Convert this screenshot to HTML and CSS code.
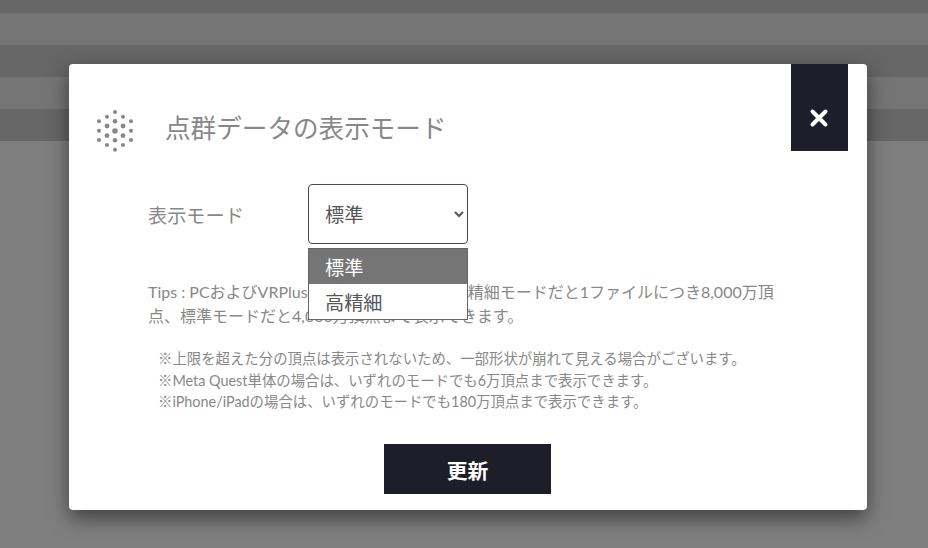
FILE: index.html
```html
<!DOCTYPE html>
<html lang="ja">
<head>
    <meta charset="UTF-8">
    <title>点群データの表示モード</title>
    <link rel="stylesheet" href="styles.css">
</head>
<body>
    <div class="backdrop">
        <div class="stripe stripe-top"></div>
        <div class="stripe stripe-light"></div>
        <div class="stripe stripe-dark"></div>
        <div class="stripe stripe-light"></div>
        <div class="stripe stripe-dark"></div>
    </div>

    <div class="modal">
        <button class="close-btn" aria-label="閉じる">
            <svg width="20" height="20" viewBox="0 0 20 20">
                <path d="M3.5 3.5L16.5 16.5M16.5 3.5L3.5 16.5" stroke="#fff" stroke-width="4" stroke-linecap="round"/>
            </svg>
        </button>

        <div class="modal-header">
            <svg class="points-icon" width="40" height="44" viewBox="0 0 40 44" fill="#888">
                <circle cx="20" cy="3" r="2"/>
                <circle cx="20" cy="12.3" r="2.3"/>
                <circle cx="20" cy="22" r="2.8"/>
                <circle cx="20" cy="31.3" r="2.3"/>
                <circle cx="20" cy="40.7" r="2"/>
                <circle cx="12" cy="7.7" r="2"/>
                <circle cx="12" cy="17" r="2.4"/>
                <circle cx="12" cy="26.7" r="2.4"/>
                <circle cx="12" cy="36" r="2"/>
                <circle cx="28" cy="7.7" r="2"/>
                <circle cx="28" cy="17" r="2.4"/>
                <circle cx="28" cy="26.7" r="2.4"/>
                <circle cx="28" cy="36" r="2"/>
                <circle cx="4" cy="12.3" r="2"/>
                <circle cx="4" cy="21.7" r="2"/>
                <circle cx="4" cy="31" r="2"/>
                <circle cx="36" cy="12.3" r="2"/>
                <circle cx="36" cy="21.7" r="2"/>
                <circle cx="36" cy="31" r="2"/>
            </svg>
            <h1 class="modal-title">点群データの表示モード</h1>
        </div>

        <div class="modal-body">
            <div class="mode-row">
                <label class="mode-label" for="mode">表示モード</label>
                <div class="select-wrap">
                    <select class="mode-select" id="mode">
                        <option>標準</option>
                        <option>高精細</option>
                    </select>
                    <ul class="mode-options">
                        <li class="selected">標準</li>
                        <li>高精細</li>
                    </ul>
                </div>
            </div>

            <p class="tips">Tips : PCおよびVRPlusでの閲覧の場合は、高精細モードだと1ファイルにつき8,000万頂点、標準モードだと4,000万頂点まで表示できます。</p>

            <ul class="notes">
                <li>※上限を超えた分の頂点は表示されないため、一部形状が崩れて見える場合がございます。</li>
                <li>※Meta Quest単体の場合は、いずれのモードでも6万頂点まで表示できます。</li>
                <li>※iPhone/iPadの場合は、いずれのモードでも180万頂点まで表示できます。</li>
            </ul>
        </div>

        <div class="modal-footer">
            <button class="update-btn">更新</button>
        </div>
    </div>
</body>
</html>
```

FILE: styles.css
```css
* {
    box-sizing: border-box;
}
html, body {
    height: 100%;
}
body {
    margin: 0;
    overflow: hidden;
    background-color: #7f7f7f;
    font-family: Lato, "Noto Sans CJK JP", sans-serif;
    color: #888;
}

/* page behind the overlay */
.stripe-top {
    height: 13px;
    background-color: #666;
}
.stripe-light {
    height: 32px;
    background-color: #757575;
}
.stripe-dark {
    height: 32px;
    background-color: #666;
}

/* modal */
.modal {
    position: absolute;
    left: 69px;
    top: 64px;
    width: 798px;
    height: 446px;
    background-color: #fff;
    border-radius: 4px;
    box-shadow: 0 8px 20px rgba(0, 0, 0, 0.5);
}
.close-btn {
    position: absolute;
    top: 0;
    right: 19px;
    width: 57px;
    height: 87px;
    padding: 24px 1px 0 0;
    border: none;
    background-color: #1e1e2a;
    cursor: pointer;
}
.modal-header {
    display: flex;
    align-items: center;
    height: 44px;
    margin-top: 45px;
    padding-left: 26px;
}
.modal-title {
    margin: 0 0 4px 30px;
    font-size: 25.6px;
    font-weight: 400;
    line-height: 1.4;
    color: #888;
}
.modal-body {
    padding: 31px 80px 0 79px;
    position: relative;
}
.mode-row {
    display: flex;
    align-items: center;
}
.mode-label {
    width: 160px;
    padding-top: 2px;
    font-size: 19.2px;
}
.select-wrap {
    position: relative;
}
.mode-select {
    display: block;
    width: 160px;
    height: 60px;
    padding: 0 8px 0 12px;
    border: 1px solid #4b4766;
    border-radius: 4px;
    background-color: #fff;
    font-family: inherit;
    font-size: 19.2px;
    color: #555;
}
.mode-options {
    position: absolute;
    top: 64px;
    left: 0;
    width: 160px;
    margin: 0;
    padding: 0;
    list-style: none;
    background-color: #fff;
    border: 1px solid #666;
    font-size: 19.2px;
    color: #555;
}
.mode-options li {
    height: 35px;
    padding-left: 16px;
    line-height: 38px;
}
.mode-options .selected {
    background-color: #757575;
    color: #fff;
}
.tips {
    margin: 36px 0 0;
    width: 632px;
    font-size: 16px;
    line-height: 24px;
}
.notes {
    margin: 20px 0 0 10px;
    padding: 0;
    list-style: none;
    font-size: 14.4px;
    line-height: 21.6px;
}
.modal-footer {
    display: flex;
    justify-content: center;
    margin-top: 31px;
    padding-right: 1px;
}
.update-btn {
    width: 167px;
    height: 50px;
    padding-top: 3px;
    border: none;
    background-color: #1e1e2a;
    color: #fff;
    font-family: inherit;
    font-size: 20.8px;
    font-weight: 700;
    cursor: pointer;
}
```
